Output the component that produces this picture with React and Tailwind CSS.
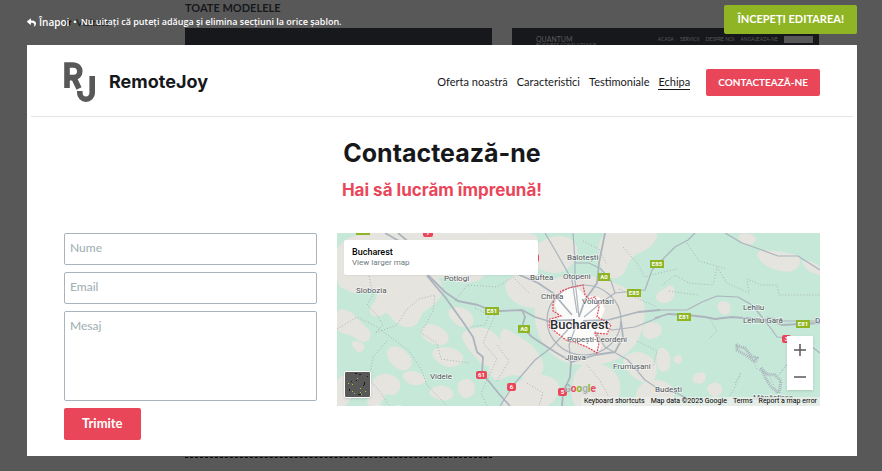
import React, { useState } from 'react';
import { FaReply, FaStar } from 'react-icons/fa';

const navLinks = ['Oferta noastră', 'Caracteristici', 'Testimoniale', 'Echipa'];

const fields = 'w-full rounded-xs border border-[#aab4bc] bg-white px-[5px] text-xs font-medium text-gray-900 placeholder-[#a4b2b5] outline-none';

const patches = [
  '0,0 100,0 200,0 198,10 170,20 150,14 130,34 150,42 130,50 112,44 98,42 106,56 98,70 84,78 80,90 70,94 58,88 50,76 40,84 32,78 44,62 36,54 22,60 10,56 0,50',
  '0,76 14,80 22,90 34,100 28,110 14,100 0,98',
  '110,78 124,74 136,84 134,94 120,92',
  '84,98 94,90 112,102 108,112 90,108',
  '50,116 62,114 76,128 68,138 54,130',
  '124,100 146,94 163,106 168,126 150,134 138,122 130,112',
  '34,148 50,140 64,150 58,162 48,158 42,173 30,173',
  '94,118 112,114 128,124 118,134 102,130',
  '64,142 78,138 90,148 76,152',
  '90,160 104,152 118,160 108,168',
  '0,146 12,142 16,158 8,173 0,173',
  '120,150 134,146 138,160 126,166',
  '14,108 28,112 22,120',
  '164,94 180,104 196,114 208,134 196,148 176,138 160,148 150,136 166,120',
  '200,10 226,2 242,14 232,36 214,40 198,32',
  '168,46 196,40 218,54 210,72 188,74 172,64',
  '204,48 250,42 284,54 308,66 304,102 286,124 256,132 222,128 202,104 198,76',
  '262,-4 322,-4 314,14 292,22 284,46 264,40',
  '284,126 302,118 320,130 316,150 298,146',
  '174,154 200,140 224,150 216,170 190,180 164,174',
  '238,134 264,130 284,146 278,178 234,178',
  '300,154 320,146 338,156 332,178 300,178',
  '326,58 336,52 336,66 324,70 319,63',
  '380,71 391,69 393,78 386,82',
  '420,18 444,20 464,24 458,38 438,36 424,28',
  '464,26 483,34 490,42 472,38',
  '322,114 332,120 332,138 320,136',
  '336,126 344,122 343,131',
  '358,142 368,140 366,150 356,148',
  '370,154 380,150 386,158 376,164',
  '402,1 418,3 416,11 404,8',
  '306,92 322,90 324,102 308,106',
];

// rounds off a polygon by running curves through the middles of its sides
function smooth(points) {
  const pts = points.split(' ').map((p) => p.split(',').map(Number));
  const mid = (a, b) => `${(a[0] + b[0]) / 2} ${(a[1] + b[1]) / 2}`;
  let d = `M${mid(pts[pts.length - 1], pts[0])}`;
  pts.forEach((p, i) => {
    d += `Q${p[0]} ${p[1]} ${mid(p, pts[(i + 1) % pts.length])}`;
  });
  return d + 'Z';
}

const cityBlocks = 'M222 58L238 52L247 62L262 64L268 76L264 86L274 92L270 102L256 100L264 112L262 120L250 114L236 108L222 104L216 94L222 84L218 72Z';

const highways = [
  'M48 0L62 8L78 24L91 42L108 59L121 68L141 72L148 75L163 78L185 77L198 84L211 88L236 87',
  'M61 0L80 16L91 44L108 64L126 89L136 104L140 119L146 124L145 140L163 162L173 173',
  'M158 24L178 40L201 50L216 60L235 82',
  'M268 0L262 30L260 50L248 67L242 84',
  'M185 77L188 84L185 94L195 104L218 119L235 129L258 122L278 119L286 104L284 88',
  'M323 77L301 79L271 87L246 88',
  'M234 129L233 144L226 160L225 173',
  'M318 85L331 81L350 82L368 84L378 86L395 84L431 87L445 92L483 90',
];

const roads = [
  'M208 0L218 17L235 47L240 80',
  'M236 0L238 27L238 47L242 84',
  'M238 30L252 30L264 36L274 48L278 60',
  'M358 0L351 7L338 14L325 27L315 37L308 57L278 60L265 69L247 84',
  'M323 84L298 94L275 97L248 88',
  'M235 92L215 114L198 127L178 150L163 173',
  'M258 98L268 114L291 127L308 147L323 157L340 160L354 168',
  'M318 77L350 77L365 69L380 63L401 64L415 72L425 84L435 97L440 104L451 105L470 110L483 120',
  'M388 0L405 10L425 17L441 23L461 23L483 37',
  'M430 84L446 88L483 88',
  'M240 90L232 112L234 129',
];

const trails = [
  'M32 43L36 62L30 72L40 82L46 92L38 100L60 92L70 76L82 66L98 62L96 78L84 100L100 110L104 126L132 130',
  'M0 96L20 84L40 94L56 106L72 118L84 136L90 152L110 173',
  'M50 108L36 124L32 146L44 160L52 173',
  'M138 75L152 82L148 92L134 94M158 82L146 110L160 126L144 160L150 173',
  'M118 68L130 52L160 54L176 44L192 60',
  'M286 14L300 30L308 44L322 40L340 36M282 56L302 66L320 74',
  'M325 52L338 42L352 50L376 52L380 34L390 50L412 60L410 46L424 52L440 52L442 62L483 62',
  'M332 58L346 60L362 62',
  'M164 22L180 16L196 26M246 8L262 16L270 32',
  'M250 132L262 146L272 164M300 108L320 118L316 134',
  'M350 10L362 28L390 36',
  'M372 84L380 98L372 106M400 110L414 122L420 136L432 142L440 160',
  'M398 150L404 140L396 158L386 173M450 132L442 142L460 116',
  'M160 112L172 128L160 148M190 150L206 160L202 173',
];

const cityLimit = 'M219 64L224 58L232 55L246 52L248 62L252 66L258 64L262 74L260 84L268 88L274 92L270 101L258 100L262 110L260 120L250 114L240 110L229 107L220 100L212 94L213 86L224 83L216 78L216 70Z';

const shields = [
  { x: 19, y: -6, w: 14, label: 'E70' },
  { x: 148, y: 74, w: 14, label: 'E81' },
  { x: 261, y: 40, w: 12, label: 'A0' },
  { x: 290, y: 56, w: 14, label: 'E85' },
  { x: 313, y: 27, w: 14, label: 'E85' },
  { x: 181, y: 92, w: 12, label: 'A0' },
  { x: 340, y: 80, w: 14, label: 'E81' },
  { x: 459, y: 87, w: 14, label: 'E81' },
  { x: 86, y: -4, w: 10, label: '7', red: true },
  { x: 192, y: 21, w: 10, label: '1', red: true },
  { x: 139, y: 138, w: 11, label: '61', red: true },
  { x: 170, y: 150, w: 9, label: '6', red: true },
  { x: 221, y: 155, w: 9, label: '5', red: true },
  { x: 445, y: 102, w: 9, label: '3', red: true },
];

const towns = [
  { x: 19, y: 60, name: 'Slobozia' },
  { x: 107, y: 48, name: 'Potlogi' },
  { x: 93, y: 146, name: 'Videle' },
  { x: 38, y: 178, name: 'Blejești' },
  { x: 230, y: 27, name: 'Balotești' },
  { x: 226, y: 46, name: 'Otopeni' },
  { x: 193, y: 47, name: 'Buftea' },
  { x: 204, y: 66, name: 'Chitila' },
  { x: 245, y: 71, name: 'Voluntari' },
  { x: 230, y: 109, name: 'Popești-Leordeni' },
  { x: 228, y: 127, name: 'Jilava' },
  { x: 276, y: 136, name: 'Frumușani' },
  { x: 318, y: 159, name: 'Budești' },
  { x: 406, y: 77, name: 'Lehliu' },
  { x: 406, y: 90, name: 'Lehliu Gară' },
  { x: 478, y: 90, name: 'Dor Mărunt' },
  { x: 416, y: 167, name: 'Mânăstirea' },
];

function MapDrawing() {
  return (
    <svg viewBox="0 0 483 173" preserveAspectRatio="xMidYMid slice" className="block h-full w-full font-[Roboto,sans-serif]">
      <rect width="483" height="173" fill="#c6e8d8" />
      <g fill="#e5e4df" stroke="#e5e4df" strokeWidth="3">
        {patches.map((p) => <path key={p} d={smooth(p)} />)}
      </g>
      <path d={cityBlocks} fill="#fff" fillOpacity="0.85" />
      <path d="M400 113l8 2 6 8 6 2-2 4-8-6-10-6zM424 135l6 6 8 1 6 6-2 12-8-6-6-10z" fill="none" stroke="#aab2bb" strokeWidth="3" strokeDasharray="1 1" />
      <g fill="none" stroke="#a9b3b9" strokeWidth="1" strokeDasharray="1 2">
        {trails.map((d) => <path key={d} d={d} />)}
      </g>
      <g fill="none" stroke="#acb4bd" strokeLinejoin="round">
        {roads.map((d) => <path key={d} d={d} strokeWidth="1.2" />)}
        {highways.map((d) => <path key={d} d={d} strokeWidth="1.8" />)}
        <ellipse cx="247" cy="87" rx="37" ry="35" strokeWidth="1.2" />
      </g>
      <path d={cityLimit} fill="none" stroke="#e94759" strokeWidth="1.2" strokeDasharray="2 1" />
      {shields.map((s) => (
        <g key={`${s.x}-${s.y}`}>
          <rect x={s.x} y={s.y} width={s.w} height="8" rx={s.red ? 2 : 0} fill={s.red ? '#e94759' : '#8fb525'} />
          <text x={s.x + s.w / 2} y={s.y + 6} fontSize="6" fontWeight="700" textAnchor="middle" fill="#fff">{s.label}</text>
        </g>
      ))}
      <g fontSize="8" fill="#4d5356" stroke="#fff" strokeOpacity="0.6" strokeWidth="1.5" paintOrder="stroke">
        {towns.map((t) => <text key={t.name} x={t.x} y={t.y}>{t.name}</text>)}
        <text x="213" y="96" fontSize="13" fontWeight="500" fill="#2b2d30" strokeOpacity="0.9">Bucharest</text>
      </g>
      <text x="227" y="159" fontSize="10" fontWeight="700">
        <tspan fill="#aab2bb">G</tspan>
        <tspan fill="#e94759">o</tspan>
        <tspan fill="#8fb525">o</tspan>
        <tspan fill="#aab2bb">g</tspan>
        <tspan fill="#8fb525">l</tspan>
        <tspan fill="#e94759">e</tspan>
      </text>
    </svg>
  );
}

function ContactMap() {
  return (
    <div className="relative h-[173px] overflow-hidden font-[Roboto,sans-serif]">
      <MapDrawing />
      <div className="absolute left-[7px] top-[7px] h-[35px] w-[194px] rounded-xs bg-white px-2 pt-[6px] shadow-xs">
        <p className="text-[9px] leading-3 font-medium text-black">Bucharest</p>
        <a href="#map" className="block text-[8px] leading-[10px] text-[#6d7a80]">View larger map</a>
      </div>
      <button aria-label="Satellite" className="absolute bottom-2 left-[7px] h-[27px] w-[27px] rounded-xs border border-white bg-[#585858] shadow-sm">
        <svg viewBox="0 0 25 25" className="h-full w-full">
          <path d="M10 1h2v1h-2zM14 2h2v1h-2zM19 10h1v3h-1zM18 13h1v1h-1zM4 17h1v2h-1zM13 22h3v1h-3zM6 9h1v1h-1zM22 4h1v1h-1zM11 8h1v1h-1z" fill="#17181b" />
          <path d="M12 6h1v1h-1zM3 11h1v1h-1zM7 12h1v1h-1zM15 16h1v1h-1zM7 19h1v1h-1zM9 21h1v1h-1zM16 22h1v1h-1zM20 19h1v1h-1zM15 20h1v1h-1z" fill="#a9c92e" />
        </svg>
      </button>
      <div className="absolute top-[103px] right-[7px] flex w-[26px] flex-col bg-white text-[#585858] shadow-sm">
        <button aria-label="Zoom in" className="flex h-[27px] items-center justify-center">
          <svg viewBox="0 0 12 12" className="h-3 w-3"><path d="M6 0v12M0 6h12" stroke="currentColor" strokeWidth="1.5" /></svg>
        </button>
        <button aria-label="Zoom out" className="flex h-[27px] items-center justify-center">
          <svg viewBox="0 0 12 12" className="h-3 w-3"><path d="M0 6h12" stroke="currentColor" strokeWidth="1.5" /></svg>
        </button>
      </div>
      <div className="absolute right-0 bottom-0 flex gap-[6px] bg-[#eceeea]/80 px-[3px] text-[7px] leading-[9px] whitespace-nowrap text-black">
        <button>Keyboard shortcuts</button>
        <span>Map data ©2025 Google</span>
        <a href="#terms">Terms</a>
        <a href="#report">Report a map error</a>
      </div>
    </div>
  );
}

function Logo() {
  return (
    <svg viewBox="0 0 31 40" className="h-10 w-[31px]" fill="none" stroke="#585858">
      <path d="M3 26V3H9.5a6.3 6.3 0 0 1 0 12.6H3M9.5 15L15 26.5" strokeWidth="5.6" />
      <path d="M28.2 14V31a6 6 0 0 1-12.4 0V29" strokeWidth="5.6" />
    </svg>
  );
}

// page that stays visible around the preview window
function TemplatesPage() {
  return (
    <div className="flex min-h-screen text-[#17181b]">
      <div className="w-[185px] shrink-0 pt-4 pl-16 text-[10px] leading-3">
        <p className="flex items-center gap-1"><FaStar className="h-2 w-2" />Vizitate</p>
        <p className="mt-[14px]">Noutăți</p>
      </div>
      <div className="min-w-0 flex-1 pr-[63px]">
        <h2 className="pt-[2px] text-[11px] leading-3 font-bold">TOATE MODELELE</h2>
        <div className="mt-[14px] grid grid-cols-2 gap-5">
          <div className="h-[430px] border-b border-dashed border-black">
            <div className="h-[420px] bg-[#17181b]" />
          </div>
          <div className="flex h-[420px] items-start justify-between bg-[#17181b] pt-2 pr-[6px] pl-6 text-[7px] leading-[7px] text-[#585858]">
            <div>
              <p>QUANTUM</p>
              <p className="text-[5px] leading-[5px]">BUSINESS CONSULTANCE</p>
            </div>
            <div className="flex items-center gap-[6px] text-[5px]">
              <span>ACASA</span>
              <span>SERVICII</span>
              <span>DESPRE NOI</span>
              <span>ANGAJEAZA-NE</span>
              <span className="h-[7px] w-[29px] bg-[#585858]" />
            </div>
          </div>
        </div>
      </div>
    </div>
  );
}

export default function App() {
  const [form, setForm] = useState({ name: '', email: '', message: '' });

  const handleChange = (e) => {
    setForm({ ...form, [e.target.name]: e.target.value });
  };

  const handleSubmit = (e) => {
    e.preventDefault();
    setForm({ name: '', email: '', message: '' });
  };

  return (
    <div className="relative h-screen overflow-hidden bg-[#585858] font-[Lato,sans-serif]">
      <TemplatesPage />

      <div className="absolute inset-0 flex flex-col pr-[25px] pl-[27px]">
        <div className="flex h-[45px] shrink-0 items-start justify-between">
          <div className="flex items-center gap-1 pt-[14px] font-['Open_Sans',sans-serif] text-[9px] leading-4 font-semibold text-white">
            <button className="flex items-center gap-[3px] text-[10px]"><FaReply className="h-[9px] w-[9px]" />Înapoi</button>
            <span>•</span>
            <p>Nu uitați că puteți adăuga și elimina secțiuni la orice șablon.</p>
          </div>
          <button className="mt-[5px] h-[29px] rounded-xs bg-[#8fb525] px-[13px] text-[11px] font-bold text-white">
            ÎNCEPEȚI EDITAREA!
          </button>
        </div>

        <main className="bg-white pb-4">
          <header className="mx-1 flex items-center justify-between border-b border-[#e5e4df] px-[33px] pt-[17px] pb-[14px]">
            <div className="flex items-center gap-[14px]">
              <Logo />
              <span className="font-[Inter,sans-serif] text-lg font-bold text-[#17181b]">RemoteJoy</span>
            </div>
            <div className="flex items-center gap-4">
              <nav className="flex gap-[9px] text-[11px] leading-[14px] text-[#17181b]">
                {navLinks.map((link) => (
                  <a key={link} href="#nav" className={link === 'Echipa' ? 'border-b border-[#17181b]' : 'border-b border-transparent'}>{link}</a>
                ))}
              </nav>
              <button className="h-[27px] rounded-xs bg-[#e94759] px-3 text-[10px] font-bold text-white">CONTACTEAZĂ-NE</button>
            </div>
          </header>

          <div className="pt-5 text-center font-[Inter,sans-serif]">
            <h1 className="text-[25px] leading-8 font-bold text-[#17181b]">Contactează-ne</h1>
            <p className="mt-[9px] text-[17px] leading-6 font-bold text-[#e94759]">Hai să lucrăm împreună!</p>
          </div>

          <div className="mt-[31px] grid grid-cols-[11fr_21fr] gap-5 px-[37px]">
            <form onSubmit={handleSubmit} className="flex flex-col items-start gap-[7px]">
              <input aria-label="Nume" name="name" placeholder="Nume" value={form.name} onChange={handleChange} className={`${fields} h-8 pb-[3px]`} />
              <input aria-label="Email" name="email" placeholder="Email" value={form.email} onChange={handleChange} className={`${fields} h-8 pb-[3px]`} />
              <textarea aria-label="Mesaj" name="message" placeholder="Mesaj" value={form.message} onChange={handleChange} className={`${fields} h-[90px] resize-none pt-[6px]`} />
              <button type="submit" className="h-8 rounded-xs bg-[#e94759] px-[18px] text-[13px] font-bold text-white">Trimite</button>
            </form>
            <ContactMap />
          </div>
        </main>
      </div>
    </div>
  );
}
